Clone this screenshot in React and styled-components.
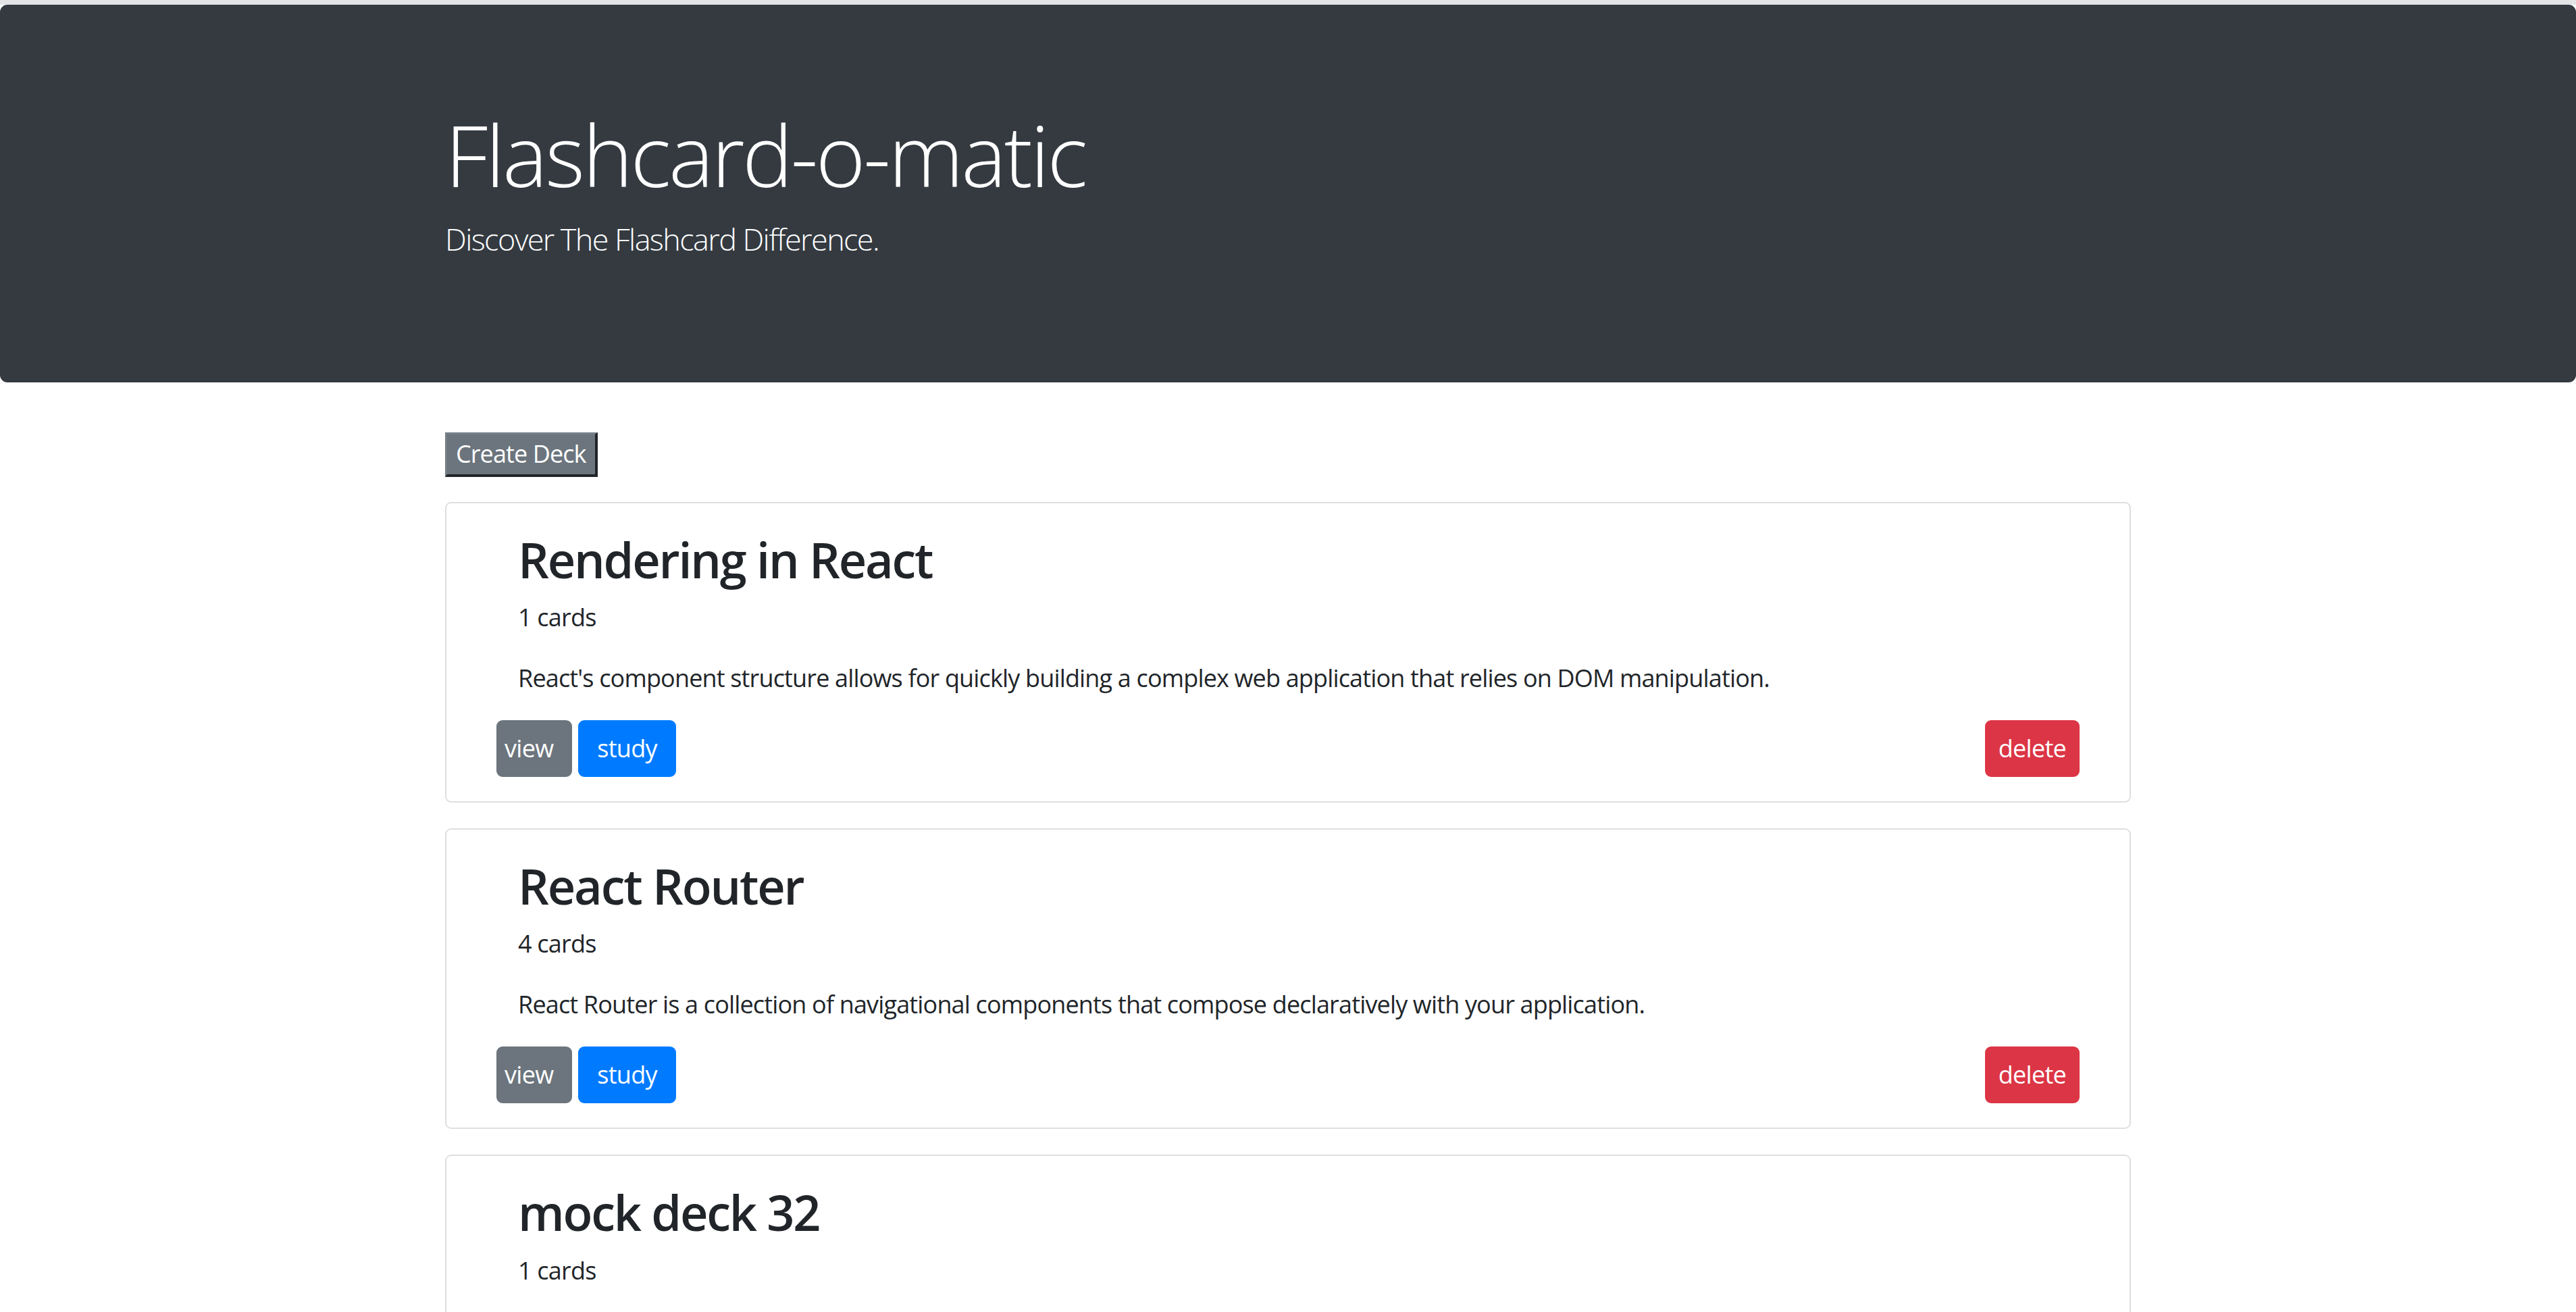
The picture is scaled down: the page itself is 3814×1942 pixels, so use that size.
import React from "react";
import styled, { createGlobalStyle } from "styled-components";

const decks = [
    {
        id: 1,
        name: "Rendering in React",
        count: 1,
        description:
            "React's component structure allows for quickly building a complex web application that relies on DOM manipulation.",
    },
    {
        id: 2,
        name: "React Router",
        count: 4,
        description:
            "React Router is a collection of navigational components that compose declaratively with your application.",
    },
    {
        id: 3,
        name: "mock deck 32",
        count: 1,
        description: "mock description",
    },
];

const App = () => {
    return (
        <>
            <GlobalStyle />
            <TopStrip />
            <Jumbotron>
                <Container>
                    <Title>Flashcard-o-matic</Title>
                    <Lead>Discover The Flashcard Difference.</Lead>
                </Container>
            </Jumbotron>
            <Container>
                <CreateButton type="button">Create Deck</CreateButton>
                <DeckList>
                    {decks.map((deck) => (
                        <DeckCard key={deck.id}>
                            <DeckText>
                                <DeckName>{deck.name}</DeckName>
                                <CardCount>{deck.count} cards</CardCount>
                                <Description>{deck.description}</Description>
                            </DeckText>
                            <ButtonRow>
                                <ButtonGroup>
                                    <ActionButton $variant="view">view</ActionButton>
                                    <ActionButton $variant="study">study</ActionButton>
                                </ButtonGroup>
                                <ActionButton $variant="delete">delete</ActionButton>
                            </ButtonRow>
                        </DeckCard>
                    ))}
                </DeckList>
            </Container>
        </>
    );
};

export default App;

const GlobalStyle = createGlobalStyle`
    body {
        margin: 0;
        background: #fff;
        color: #212529;
        font-family: "Open Sans", "Noto Sans", sans-serif;
    }
`;
const TopStrip = styled.div`
    height: 7px;
    background: #e3e4e6;
`;
const Jumbotron = styled.header`
    background-color: #343a40;
    color: #fff;
    border-radius: 11px;
    padding: 146px 0 178px;
`;
const Container = styled.div`
    width: 2496px;
    margin: 0 auto;
`;
const Title = styled.h1`
    margin: 0 0 16px;
    font-size: 126px;
    font-weight: 300;
    line-height: 1.2;
    letter-spacing: -3.4px;
`;
const Lead = styled.p`
    margin: 0;
    font-size: 45px;
    font-weight: 300;
    line-height: 1.5;
    letter-spacing: -1.6px;
`;
const CreateButton = styled.button`
    display: block;
    margin-top: 74px;
    height: 66px;
    padding: 0 13px;
    font-family: inherit;
    font-size: 36px;
    line-height: 1;
    letter-spacing: -0.9px;
    color: #fff;
    background-color: #6c757d;
    border-style: solid;
    border-width: 3px 4px 4px 3px;
    border-color: #767f87 #212529 #212529 #767f87;
    border-radius: 0;
`;
const DeckList = styled.div`
    margin-top: 37px;
`;
const DeckCard = styled.div`
    border: 2px solid #dfdfdf;
    border-radius: 9px;
    padding: 40px 74px 36px;
    margin-bottom: 38px;
    background: #fff;
`;
const DeckText = styled.div`
    padding: 0 32px;
`;
const DeckName = styled.h2`
    margin: 0 0 16px;
    font-size: 72px;
    font-weight: 600;
    line-height: 1.2;
    letter-spacing: -2.2px;
`;
const CardCount = styled.p`
    margin: 0 0 36px;
    font-size: 36px;
    line-height: 1.5;
    letter-spacing: -0.8px;
`;
const Description = styled.p`
    margin: 0 0 35px;
    font-size: 36px;
    line-height: 1.5;
    letter-spacing: -0.84px;
`;
const ButtonRow = styled.div`
    display: flex;
    justify-content: space-between;
    align-items: center;
`;
const ButtonGroup = styled.div`
    display: flex;
    gap: 9px;
`;
const colours = {
    view: "#6c757d",
    study: "#007bff",
    delete: "#dc3545",
};
const paddings = {
    view: "0 26px 0 10px",
    study: "0 26px",
    delete: "0 18px",
};
const ActionButton = styled.button`
    height: 84px;
    padding: ${(p) => paddings[p.$variant]};
    font-family: inherit;
    font-size: 36px;
    line-height: 54px;
    letter-spacing: -0.72px;
    color: #fff;
    background-color: ${(p) => colours[p.$variant]};
    border: 2px solid ${(p) => colours[p.$variant]};
    border-radius: 9px;
`;
